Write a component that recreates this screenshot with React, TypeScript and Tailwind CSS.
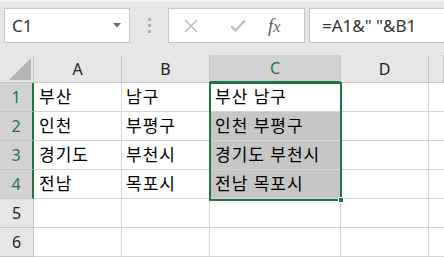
import React from "react";

const GREEN = "#217346";

const data: [string, string, string][] = [
  ["부산", "남구", "부산 남구"],
  ["인천", "부평구", "인천 부평구"],
  ["경기도", "부천시", "경기도 부천시"],
  ["전남", "목포시", "전남 목포시"],
  ["", "", ""],
  ["", "", ""],
];

const cols = ["A", "B", "C", "D", ""];

export default function App() {
  return (
    <div
      className="relative w-[444px] h-[257px] overflow-hidden bg-[#e6e6e6]"
      style={{ fontFamily: '"Noto Sans", "Noto Sans CJK KR", sans-serif' }}
    >
      {/* formula bar */}
      <div className="h-[2px] bg-[#f0f0f0]" />
      <div className="flex items-stretch h-[35px] mt-[6px]">
        <div className="ml-[4px] w-[126px] bg-white border border-[#c6c6c6] flex items-center justify-between pl-[7px] pr-[8px]">
          <span className="text-[17px] text-[#333] leading-none">C1</span>
          <svg width="8" height="5" viewBox="0 0 8 5">
            <path d="M0 0 H8 L4 4.5 Z" fill="#6b6b6b" />
          </svg>
        </div>
        <div className="w-[38px] flex flex-col items-center justify-center gap-[3px]">
          <div className="w-[3px] h-[3px] bg-[#b0b0b0]" />
          <div className="w-[3px] h-[3px] bg-[#b0b0b0]" />
          <div className="w-[3px] h-[3px] bg-[#b0b0b0]" />
        </div>
        <div className="w-[137px] bg-white border border-[#c6c6c6] flex items-center">
          <svg className="ml-[15px]" width="14" height="14" viewBox="0 0 14 14">
            <path d="M1 1 L13 13 M13 1 L1 13" stroke="#bdbdbd" strokeWidth="1.6" />
          </svg>
          <svg className="ml-[32px]" width="16" height="13" viewBox="0 0 16 13">
            <path d="M1 7 L5.5 11.5 L15 1.5" stroke="#bdbdbd" strokeWidth="2.2" fill="none" />
          </svg>
          <span
            className="ml-[22px] text-[19px] italic text-[#5e5e5e] leading-none"
            style={{ fontFamily: '"Liberation Serif", "DejaVu Serif", serif' }}
          >
            <span>f</span>
            <span className="text-[16px]">x</span>
          </span>
        </div>
        <div className="ml-[4px] flex-1 bg-white border border-r-0 border-[#c6c6c6] flex items-center pl-[12px]">
          <span className="text-[17px] text-[#333] leading-none">=A1&amp;" "&amp;B1</span>
        </div>
      </div>

      {/* grid */}
      <div
        className="absolute left-0 top-[55px] grid"
        style={{
          gridTemplateColumns: "34px 88px 88px 131px 88px 15px",
          gridTemplateRows: "28px 29px 29px 29px 29px 29px 29px",
        }}
      >
        {/* corner */}
        <div className="relative bg-[#e6e6e6] border-r border-b border-[#c6c6c6]">
          <svg className="absolute right-[2px] bottom-[2px]" width="22" height="22" viewBox="0 0 22 22">
            <path d="M22 0 V22 H0 Z" fill="#b4b4b4" />
          </svg>
        </div>
        {cols.map((c, i) =>
          c === "C" ? (
            <div
              key={i}
              className="bg-[#d2d2d2] border-r border-[#c6c6c6] border-b-2 border-b-[#217346] flex items-center justify-center text-[16px] text-[#217346]"
            >
              {c}
            </div>
          ) : (
            <div
              key={i}
              className="bg-[#e6e6e6] border-r border-b border-[#c6c6c6] flex items-center justify-center text-[16px] text-[#222]"
            >
              {c}
            </div>
          )
        )}
        {data.map((row, r) => {
          const sel = r < 4;
          return (
            <React.Fragment key={r}>
              <div
                className={
                  sel
                    ? "bg-[#d2d2d2] border-b border-[#c6c6c6] border-r-2 border-r-[#217346] flex items-center justify-center text-[16px] text-[#217346]"
                    : "bg-[#e6e6e6] border-b border-r border-[#c6c6c6] flex items-center justify-center text-[16px] text-[#222]"
                }
              >
                {r + 1}
              </div>
              <div className="bg-white border-r border-b border-[#d4d4d4] flex items-center pl-[5px] text-[17px] tracking-[1px] text-black">
                {row[0]}
              </div>
              <div className="bg-white border-r border-b border-[#d4d4d4] flex items-center pl-[4px] text-[17px] tracking-[1px] text-black">
                {row[1]}
              </div>
              <div
                className={
                  (sel && r > 0 ? "bg-[#c6c6c6] " : "bg-white ") +
                  "border-r border-b border-[#d4d4d4] flex items-center pl-[5px] text-[17px] tracking-[1px] text-black"
                }
              >
                {row[2]}
              </div>
              <div className="bg-white border-r border-b border-[#d4d4d4]" />
              <div className="bg-white border-b border-[#d4d4d4]" />
            </React.Fragment>
          );
        })}
      </div>

      {/* selection overlay */}
      <div
        className="absolute left-[209px] top-[82px] w-[133px] h-[119px] border-2"
        style={{ borderColor: GREEN }}
      />
      <div
        className="absolute left-[338px] top-[197px] w-[6px] h-[6px] border border-white"
        style={{ backgroundColor: GREEN }}
      />
    </div>
  );
}
